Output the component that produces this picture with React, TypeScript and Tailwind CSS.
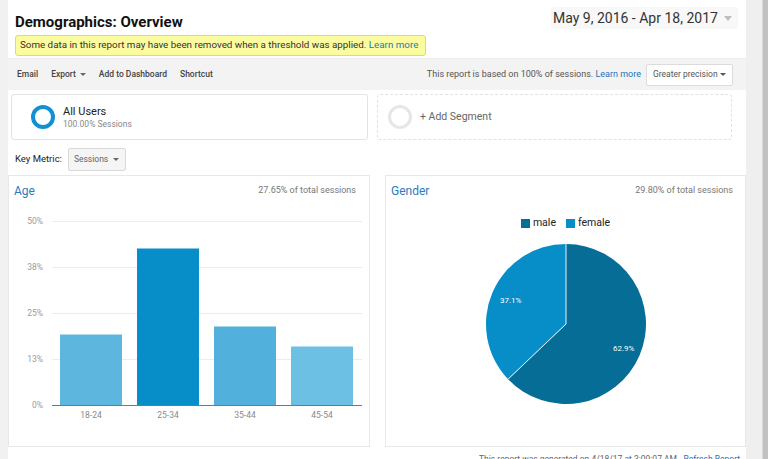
import React from "react";

const Caret = ({ color = "#666", w = 7, h = 4 }: { color?: string; w?: number; h?: number }) => (
  <svg width={w} height={h} viewBox={`0 0 ${w} ${h}`} className="inline-block shrink-0">
    <polygon points={`0,0 ${w},0 ${w / 2},${h}`} fill={color} />
  </svg>
);

const AgeChart = () => {
  const grid = [
    { y: 10, l: "50%" },
    { y: 56, l: "38%" },
    { y: 102, l: "25%" },
    { y: 148, l: "13%" },
  ];
  const bars = [
    { x: 51, top: 123, c: "#5cb6de", l: "18-24" },
    { x: 128, top: 37, c: "#078dc8", l: "25-34" },
    { x: 205, top: 115, c: "#52b1dc", l: "35-44" },
    { x: 282, top: 135, c: "#6cc0e4", l: "45-54" },
  ];
  return (
    <svg width={360} height={215} className="block" style={{ fontFamily: "Roboto, 'Liberation Sans', sans-serif" }}>
      {grid.map((g) => (
        <g key={g.l}>
          <line x1={43} x2={353} y1={g.y + 0.5} y2={g.y + 0.5} stroke="#ececec" strokeWidth={1} />
          <text x={34} y={g.y + 3} textAnchor="end" fontSize={8.5} fill="#9a9a9a">
            {g.l}
          </text>
        </g>
      ))}
      <text x={34} y={197} textAnchor="end" fontSize={8.5} fill="#9a9a9a">
        0%
      </text>
      {bars.map((b) => (
        <g key={b.l}>
          <rect x={b.x} y={b.top} width={62} height={194 - b.top} fill={b.c} />
          <line x1={b.x} x2={b.x + 62} y1={b.top + 0.5} y2={b.top + 0.5} stroke="#ffffff" strokeOpacity={0.5} />
          <text x={b.x + 31} y={207} textAnchor="middle" fontSize={8.5} fill="#8a8a8a">
            {b.l}
          </text>
        </g>
      ))}
      <line x1={43} x2={353} y1={194.5} y2={194.5} stroke="#777" strokeWidth={1} />
    </svg>
  );
};

const Pie = () => (
  <svg width={162} height={162} viewBox="-1 -1 162 162" className="block">
    <path d="M80,80 L80,0 A80,80 0 1 1 22.06,135.17 Z" fill="#066d97" />
    <path d="M80,80 L22.06,135.17 A80,80 0 0 1 80,0 Z" fill="#078ec9" />
    <line x1={80} y1={0} x2={80} y2={80} stroke="#e6f3fa" strokeWidth={1} />
    <line x1={80} y1={80} x2={22.06} y2={135.17} stroke="#e6f3fa" strokeWidth={1} />
    <text x={14} y={59} fontSize={8} fill="#ffffff" style={{ fontFamily: "Roboto, 'Liberation Sans', sans-serif" }}>
      37.1%
    </text>
    <text x={127} y={107} fontSize={8} fill="#ffffff" style={{ fontFamily: "Roboto, 'Liberation Sans', sans-serif" }}>
      62.9%
    </text>
  </svg>
);

export default function App() {
  return (
    <div className="flex h-[459px] overflow-hidden bg-[#f1f1f1] font-['Roboto','Liberation_Sans',sans-serif] text-[#222]">
      <div className="ml-[8px] w-[738px] shrink-0 bg-white">
        {/* Header */}
        <div className="h-[58px]">
          <div className="flex items-start justify-between">
            <h1 className="ml-[7px] mt-[13px] whitespace-nowrap text-[15px] font-bold leading-[18px] text-[#111]">Demographics: Overview</h1>
            <div className="mr-[8px] mt-[7px] flex h-[22px] w-[187px] items-center justify-between rounded-[3px] bg-[#f8f8f8] pl-[2px] pr-[6px]">
              <span className="whitespace-nowrap text-[14px] leading-[20px] text-[#333]">May 9, 2016 - Apr 18, 2017</span>
              <Caret color="#bdbdbd" w={8} h={5} />
            </div>
          </div>
          <div className="ml-[7px] mt-[4px] flex h-[21px] w-[411px] items-center whitespace-nowrap rounded-[3px] border border-[#e2df57] bg-[#fbfba0] pl-[4px] text-[9.8px] text-[#333]">
            Some data in this report may have been removed when a threshold was applied.&nbsp;
            <span className="text-[#1b7fa6]">Learn more</span>
          </div>
        </div>

        {/* Toolbar */}
        <div className="flex h-[32px] items-center justify-between border-t border-[#ececec] bg-[#f3f3f3]">
          <div className="ml-[9px] flex items-center gap-[13px] whitespace-nowrap text-[8.5px] font-medium text-[#444]">
            <span>Email</span>
            <span className="flex items-center gap-[4px]">
              Export <Caret color="#666" w={6} h={3} />
            </span>
            <span>Add to Dashboard</span>
            <span>Shortcut</span>
          </div>
          <div className="mr-[13px] flex items-center whitespace-nowrap text-[9px] text-[#555]">
            <span>
              This report is based on 100% of sessions. <span className="text-[#1a73b8]">Learn more</span>
            </span>
            <div className="ml-[5px] flex h-[22px] w-[87px] items-center justify-between rounded-[2px] border border-[#dcdcdc] bg-white pl-[6px] pr-[6px] text-[8.5px]">
              <span>Greater precision</span>
              <Caret color="#555" w={6} h={3} />
            </div>
          </div>
        </div>

        {/* Segments */}
        <div className="mt-[4px] flex gap-[9px] pl-[3px]">
          <div className="flex h-[46px] w-[357px] items-center rounded-[3px] border border-[#e3e3e3]">
            <div className="ml-[19px] h-[24px] w-[24px] rounded-full border-[4px] border-[#1190d2]" />
            <div className="ml-[8px] flex flex-col">
              <span className="text-[11px] leading-[14px] text-[#222]">All Users</span>
              <span className="text-[8.5px] leading-[11px] text-[#888]">100.00% Sessions</span>
            </div>
          </div>
          <div className="flex h-[46px] w-[355px] items-center rounded-[3px] border border-dashed border-[#e2e2e2]">
            <div className="ml-[10px] h-[24px] w-[24px] rounded-full border-[3px] border-[#e6e6e6]" />
            <span className="ml-[8px] text-[10.5px] text-[#666]">+ Add Segment</span>
          </div>
        </div>

        {/* Key metric */}
        <div className="mt-[8px] flex items-center">
          <span className="ml-[7px] text-[9.5px] text-[#222]">Key Metric:</span>
          <div className="ml-[6px] flex h-[23px] w-[58px] items-center justify-between rounded-[2px] border border-[#d9d9d9] bg-[#f5f5f5] pl-[5px] pr-[6px] text-[8.5px] text-[#666]">
            <span>Sessions</span>
            <Caret color="#666" w={6} h={3} />
          </div>
        </div>

        {/* Cards */}
        <div className="mt-[4px] flex gap-[15px]">
          <div className="h-[272px] w-[362px] border border-[#e8e8e8]">
            <div className="flex items-center justify-between pl-[5px] pr-[13px] pt-[8px]">
              <span className="text-[12px] leading-[14px] text-[#2b7bbd]">Age</span>
              <span className="text-[9px] text-[#777]">27.65% of total sessions</span>
            </div>
            <div className="mt-[13px]">
              <AgeChart />
            </div>
          </div>
          <div className="h-[272px] w-[361px] border border-[#e8e8e8]">
            <div className="flex items-center justify-between pl-[5px] pr-[12px] pt-[8px]">
              <span className="text-[12px] leading-[14px] text-[#2b7bbd]">Gender</span>
              <span className="text-[9px] text-[#777]">29.80% of total sessions</span>
            </div>
            <div className="mt-[18px] flex items-center justify-center gap-[10px] text-[10.5px] leading-[14px] text-[#222]">
              <span className="flex items-center gap-[3px]">
                <span className="h-[9px] w-[9px] bg-[#066d97]" />
                male
              </span>
              <span className="flex items-center gap-[3px]">
                <span className="h-[9px] w-[9px] bg-[#078ec9]" />
                female
              </span>
            </div>
            <div className="mt-[13px] flex justify-center">
              <Pie />
            </div>
          </div>
        </div>

        {/* Footer */}
        <div className="mt-[6px] whitespace-nowrap pr-[6px] text-right text-[8.5px] leading-[12px] text-[#666]">
          This report was generated on 4/18/17 at 3:09:07 AM - <span className="text-[#1a73b8]">Refresh Report</span>
        </div>
      </div>
      <div className="w-[16px] shrink-0 bg-[#efefef]" />
      <div className="w-[6px] shrink-0 border-l border-[#d8d8d8] bg-[#c1c1c1]" />
    </div>
  );
}
